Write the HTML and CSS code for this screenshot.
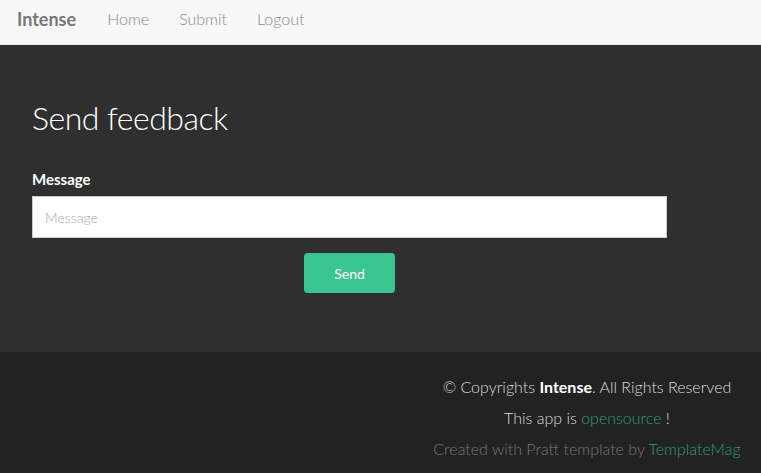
FILE: index.html
```html
<!DOCTYPE html>
<html>
<head>
<meta charset="utf-8">
<link rel="stylesheet" href="styles.css">
</head>
<body>
<nav class="navbar">
  <a class="brand" href="#">Intense</a>
  <ul class="nav">
    <li><a href="#">Home</a></li>
    <li><a href="#">Submit</a></li>
    <li><a href="#">Logout</a></li>
  </ul>
</nav>
<main class="main">
  <h1 class="title">Send feedback</h1>
  <form class="form">
    <label class="label" for="msg">Message</label>
    <input class="input" id="msg" type="text" placeholder="Message">
    <div class="actions"><button class="btn" type="button">Send</button></div>
  </form>
</main>
<footer class="footer">
  <div class="footer-col">
    <p class="line light">© Copyrights <strong>Intense</strong>. All Rights Reserved</p>
    <p class="line light">This app is <a class="green" href="#">opensource</a> !</p>
    <p class="line muted">Created with Pratt template by <a class="green" href="#">TemplateMag</a></p>
  </div>
</footer>
</body>
</html>
```
FILE: styles.css
```css
* { box-sizing: border-box; }
html, body { margin: 0; padding: 0; }
body {
  font-family: Lato, "Open Sans", sans-serif;
  background: #222;
  width: 761px;
  height: 473px;
  overflow: hidden;
}
a { text-decoration: none; }
.navbar {
  height: 45px;
  background: #f8f8f8;
  border-bottom: 1px solid #e7e7e7;
  display: flex;
  align-items: center;
  padding: 0 0 7px 17px;
}
.brand {
  font-size: 18px;
  font-weight: 700;
  color: #777;
  margin-right: 15px;
}
.nav {
  display: flex;
  list-style: none;
  margin: 0 0 0 1px;
  padding: 0;
}
.nav a {
  display: block;
  padding: 0 15px;
  font-size: 16px;
  font-weight: 300;
  color: #888;
}
.main {
  background: #2f2f2f;
  height: 307px;
  padding: 55px 32px 0;
}
.title {
  margin: 0;
  font-size: 32px;
  font-weight: 300;
  line-height: 1.1;
  letter-spacing: -0.5px;
  color: #fff;
}
.form {
  width: 635px;
  margin-top: 33px;
  display: flex;
  flex-direction: column;
}
.label {
  font-size: 15px;
  font-weight: 700;
  line-height: 21px;
  color: #fff;
  margin-top: 1px;
  margin-bottom: 6px;
}
.input {
  height: 42px;
  border: 1px solid #ccc;
  background: #fff;
  padding: 0 12px;
  font-family: Lato, sans-serif;
  font-size: 14px;
  font-weight: 300;
  outline: none;
}
.input::placeholder { color: #aaa; }
.actions {
  display: flex;
  justify-content: center;
  margin-top: 15px;
}
.btn {
  width: 91px;
  height: 40px;
  border: none;
  border-radius: 4px;
  background: #3bc591;
  color: #fff;
  font-family: Lato, sans-serif;
  font-size: 14px;
  font-weight: 400;
}
.footer {
  height: 121px;
  background: #222;
  display: flex;
  justify-content: flex-end;
  padding-top: 19px;
}
.footer-col {
  width: 348px;
  text-align: center;
}
.line {
  margin: 0;
  font-size: 16px;
  font-weight: 300;
  line-height: 31px;
}
.line strong { font-weight: 700; color: #fff; }
.light { color: #ddd; }
.muted { color: #777; }
.green { color: #2e9e6b; }
```
